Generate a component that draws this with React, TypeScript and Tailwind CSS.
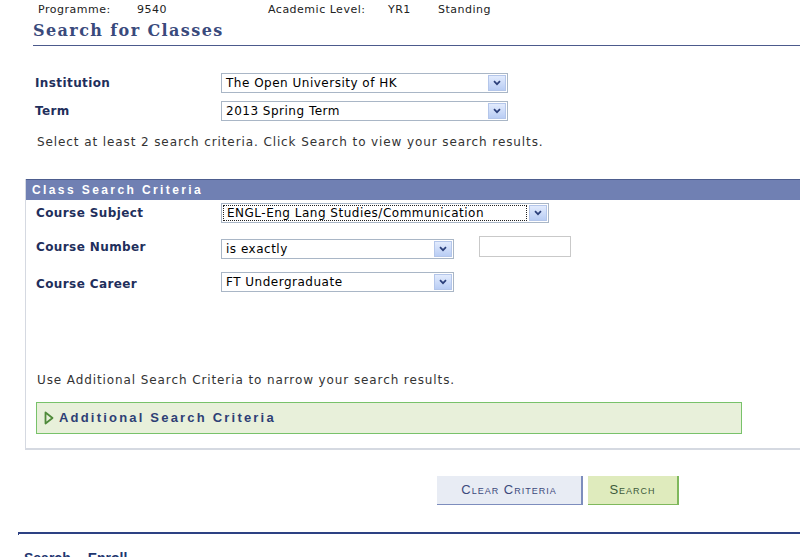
import { ReactNode } from "react";

const LABEL = "text-[#1f2f5c] font-bold text-[12px] tracking-[0.4px]";

function Chevron() {
  return (
    <svg width="8" height="6" viewBox="0 0 8 6">
      <path d="M1 1.2 L4 4.2 L7 1.2" fill="none" stroke="#2b3f7a" strokeWidth="1.7" />
    </svg>
  );
}

function Select({ value, width, focused }: { value: string; width: number; focused?: boolean }) {
  return (
    <div
      className="flex h-[20px] items-stretch border border-[#a9b6c6] bg-white"
      style={{ width }}
    >
      <div className="flex flex-1 items-center p-[1px]">
        <div
          className={`flex h-full flex-1 items-center pl-[3px] text-[12px] tracking-[0.5px] text-black ${
            focused ? "border border-dotted border-[#222]" : ""
          }`}
        >
          {value}
        </div>
      </div>
      <div className="m-[1px] flex w-[18px] items-center justify-center border border-[#b4c6ea] bg-gradient-to-b from-[#e2ebfd] to-[#b9cdf4]">
        <Chevron />
      </div>
    </div>
  );
}

function Row({ label, children, labelWidth }: { label: string; children: ReactNode; labelWidth: string }) {
  return (
    <div className="flex items-center">
      <div className={`${labelWidth} pl-[10px] ${LABEL}`}>{label}</div>
      {children}
    </div>
  );
}

export default function App() {
  return (
    <div className="h-[557px] w-[800px] overflow-hidden bg-white font-['DejaVu_Sans',Verdana,sans-serif] text-[11px] text-[#333]">
      {/* header strip */}
      <div className="flex h-[20px] items-center pl-[38px] tracking-[0.5px] text-[#222]">
        <span className="w-[99px]">Programme:</span>
        <span className="w-[131px]">9540</span>
        <span className="w-[120px]">Academic Level:</span>
        <span className="w-[50px]">YR1</span>
        <span>Standing</span>
      </div>

      <div className="ml-[33px] flex h-[26px] items-center border-b border-[#4c5a8c]">
        <h1 className="pb-[3px] font-['DejaVu_Serif',Georgia,serif] text-[16px] font-bold tracking-[1.4px] text-[#3a4a7c]">
          Search for Classes
        </h1>
      </div>

      <div className="mt-[27px] flex flex-col gap-[8px] pl-[25px]">
        <Row label="Institution" labelWidth="w-[196px]">
          <Select value="The Open University of HK" width={287} />
        </Row>
        <Row label="Term" labelWidth="w-[196px]">
          <Select value="2013 Spring Term" width={287} />
        </Row>
      </div>

      <p className="mt-[14px] pl-[37px] text-[12px] leading-[14px] tracking-[0.9px]">
        Select at least 2 search criteria. Click Search to view your search results.
      </p>

      {/* criteria panel */}
      <div className="ml-[25px] mt-[30px] w-[790px] border-b-2 border-l border-[#d5d9e1]">
        <div className="flex h-[21px] items-center border-t border-[#4d5d8e] bg-[#7080b3] pl-[6px] font-['Liberation_Sans',Arial,sans-serif] text-[12px] font-bold tracking-[2.4px] text-white">
          Class Search Criteria
        </div>

        <div className="mt-[3px]">
          <Row label="Course Subject" labelWidth="w-[195px]">
            <Select value="ENGL-Eng Lang Studies/Communication" width={328} focused />
          </Row>
        </div>
        <div className="mt-[12px] flex items-start">
          <div className={`w-[195px] pl-[10px] pt-[3px] ${LABEL}`}>Course Number</div>
          <div className="mt-[4px]">
            <Select value="is exactly" width={233} />
          </div>
          <div className="ml-[25px] mt-[1px] h-[21px] w-[92px] border border-[#c9c9c9] bg-white" />
        </div>
        <div className="mt-[13px] flex items-start">
          <div className={`w-[195px] pl-[10px] pt-[3px] ${LABEL}`}>Course Career</div>
          <Select value="FT Undergraduate" width={233} />
        </div>

        <p className="mt-[80px] pl-[11px] text-[12px] leading-[14px] tracking-[0.9px]">
          Use Additional Search Criteria to narrow your search results.
        </p>

        <div className="mb-[14px] ml-[10px] mt-[15px] flex h-[32px] w-[706px] items-center gap-[5px] border border-[#78c26a] bg-[#e8f0da] pl-[7px]">
          <svg width="10" height="14" viewBox="0 0 10 14">
            <path d="M1.5 1.5 L8.5 7 L1.5 12.5 Z" fill="#e8f0da" stroke="#4f8a3a" strokeWidth="1.8" strokeLinejoin="round" />
          </svg>
          <span className="font-['Liberation_Sans',Arial,sans-serif] text-[13px] font-bold tracking-[2.2px] text-[#2e3f75]">
            Additional Search Criteria
          </span>
        </div>
      </div>

      {/* buttons */}
      <div className="mt-[26px] flex gap-[5px] pl-[437px] font-['Liberation_Sans',Arial,sans-serif] tracking-[1px]">
        <button className="flex h-[29px] w-[146px] items-center justify-center border-b border-r-2 border-[#7d8dbd] bg-[#e8ecf4] text-[13px] text-[#3c4a7c] [font-variant:small-caps]">
          Clear Criteria
        </button>
        <button className="flex h-[29px] w-[91px] items-center justify-center border-b border-r-2 border-[#7fb85c] bg-[#dfebbd] text-[13px] text-[#3d5a3a] [font-variant:small-caps]">
          Search
        </button>
      </div>

      <div className="ml-[18px] mt-[27px] h-[3px] border-l border-t-2 border-[#2d4183]" />

      <div className="mt-[15px] flex gap-[17px] pl-[24px] font-['Liberation_Sans',Arial,sans-serif] text-[14px] font-bold leading-[16px] text-[#1e3670]">
        <span>Search</span>
        <span>Enroll</span>
      </div>
    </div>
  );
}
